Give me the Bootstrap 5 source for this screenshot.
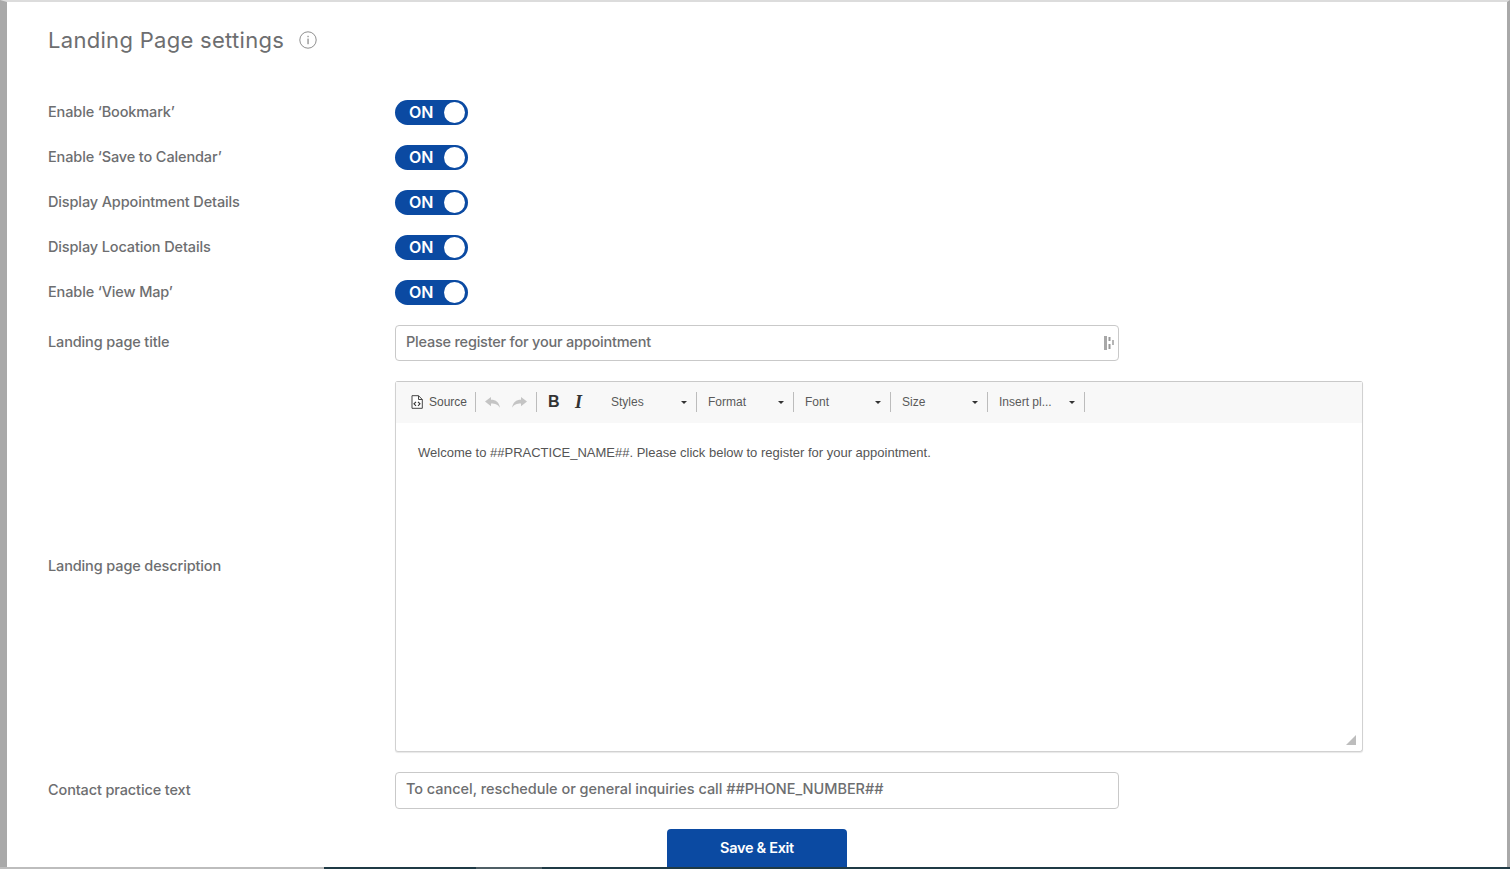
<!DOCTYPE html>
<html lang="en">
<head>
<meta charset="utf-8">
<title>Landing Page settings</title>
<link rel="stylesheet" href="https://cdn.jsdelivr.net/npm/bootstrap@5.3.0/dist/css/bootstrap.min.css">
<style>
html,body{height:100%;margin:0;overflow:hidden}
body{font-family:Inter,"Liberation Sans",sans-serif;color:#6d6e70;background:#fff}
.shell{height:869px;display:flex;flex-direction:column}
.pane{flex:1 1 auto;min-height:0;overflow:hidden;border-top:2px solid #dcdcdc;border-left:7px solid #a9a9a9;border-right:3px solid #a9a9a9;padding:0 0 0 41px}
.page-ttl{font-size:22px;font-weight:400;line-height:30px;letter-spacing:.3px;color:#6d6e70;margin:0;padding-top:23px;height:88px;gap:15px}
.ttl-info{margin-top:6px}
.set-row{height:45px}
.set-label{width:347px;flex:none;font-size:14.5px;font-weight:500;line-height:20px;color:#6d6e70;letter-spacing:-.13px;margin:0;padding-bottom:2px}
.tog{width:73px;height:25px;border-radius:13px;background:#0b4aa2;color:#fff;font-size:16px;font-weight:600;line-height:25px;padding-left:14px;position:relative}
.tog::after{content:"";position:absolute;right:3px;top:2px;width:21px;height:21px;border-radius:50%;background:#fff}
.field-wrap{width:724px;position:relative}
.form-control.fld{height:36px;border:1px solid #c9c9c9;border-radius:4px;font-size:14.5px;font-weight:500;color:#6d6e70;padding:0 10px 4px;box-shadow:none;letter-spacing:-.22px}
.form-control.fld-tall{height:37px;letter-spacing:-.03px}
.row-gap-a{margin-top:10px}
.row-gap-b{margin-top:20px}
.grab{position:absolute;right:4px;top:10px}
.ed{width:968px;height:371px;border:1px solid #d1d1d1;border-top-color:#c9c9c9;border-radius:3px;display:flex;flex-direction:column;position:relative;font-family:"Liberation Sans",Arial,sans-serif;box-shadow:0 1px 1px #e8e8e8}
.ed-bar{height:41px;background:#f8f8f8;display:flex;align-items:center;font-size:12px;color:#555;flex:none;padding-bottom:1px}
.sep{width:1px;height:20px;background:#bcbcbc;flex:none}
.tb{display:flex;align-items:center;flex:none}
.tb-src{margin-left:15px;width:64px;gap:6px}
.tb-undo{width:27px}
.tb-redo{width:24px}
.tb-b{width:27px}
.tb-i{width:24px}
.sep-a{margin-right:9px}
.sep-b{margin-right:11px}
.combo{width:96px;padding-left:11px;display:flex;align-items:center;justify-content:space-between;padding-right:9px;flex:none;color:#5a5a5a}
.combo-first{width:97px;padding-left:12px}
.caret-s{width:0;height:0;border-left:3.5px solid transparent;border-right:3.5px solid transparent;border-top:3.5px solid #333;margin-top:1px}
.bold-g{font-family:"Liberation Sans",Arial,sans-serif;font-weight:700;font-size:16px;color:#333;line-height:1}
.ital-g{font-family:"Liberation Serif",serif;font-style:italic;font-weight:700;font-size:18px;color:#333;line-height:1}
.ed-body{flex:1;padding:21px 22px;font-size:13px;line-height:18px;color:#555}
.ed-grip{position:absolute;right:6px;bottom:6px}
.btn.btn-save{width:180px;height:44px;margin-left:619px;margin-top:20px;background:#0b4aa2;border:0;border-radius:4px 4px 0 0;color:#fff;font-weight:600;font-size:14.5px;letter-spacing:-.3px;padding:0 0 6px;display:block}
.strip{height:2px;display:flex;flex:none}
.strip-a{width:324px;background:#bdbdbd}
.strip-b{width:152px;background:#1f3a45}
.strip-c{width:66px;background:#4f5f66}
.strip-d{flex:1;background:#1f3a45}
</style>
</head>
<body>
<div class="shell">
<main class="pane">
  <h1 class="page-ttl d-flex align-items-start">
    <span>Landing Page settings</span>
    <svg class="ttl-info" width="18" height="18" viewBox="0 0 18 18" fill="none" aria-hidden="true"><circle cx="9" cy="9" r="8.2" stroke="#8f8f8f" stroke-width="1"/><rect x="8.4" y="7.6" width="1.3" height="5.6" fill="#8f8f8f"/><rect x="8.4" y="4.8" width="1.3" height="1.4" fill="#8f8f8f"/></svg>
  </h1>
  <div class="set-row d-flex align-items-center"><label class="set-label">Enable ‘Bookmark’</label><div class="tog">ON</div></div>
  <div class="set-row d-flex align-items-center"><label class="set-label">Enable ‘Save to Calendar’</label><div class="tog">ON</div></div>
  <div class="set-row d-flex align-items-center"><label class="set-label">Display Appointment Details</label><div class="tog">ON</div></div>
  <div class="set-row d-flex align-items-center"><label class="set-label">Display Location Details</label><div class="tog">ON</div></div>
  <div class="set-row d-flex align-items-center"><label class="set-label">Enable ‘View Map’</label><div class="tog">ON</div></div>
  <div class="d-flex align-items-center row-gap-a">
    <label class="set-label">Landing page title</label>
    <div class="field-wrap">
      <input class="form-control fld" type="text" value="Please register for your appointment">
      <svg class="grab" width="12" height="16" viewBox="0 0 12 16" aria-hidden="true"><rect x="1" y="1" width="3" height="14" fill="#a8a8a8"/><rect x="5.5" y="2" width="2" height="4" fill="#9a9a9a"/><rect x="5.5" y="9" width="2" height="5" fill="#9a9a9a"/><rect x="9" y="5" width="2" height="5" fill="#b5b5b5"/></svg>
    </div>
  </div>
  <div class="d-flex align-items-center row-gap-b">
    <label class="set-label">Landing page description</label>
    <div class="ed">
      <div class="ed-bar">
        <span class="tb tb-src">
          <svg width="12" height="14" viewBox="0 0 12 14" fill="none" aria-hidden="true"><path d="M1 .7h6.500L11.300 4.500v8.800H1z" fill="#fff" stroke="#444"/><path d="M7.500 .7v3.800h3.800" stroke="#444"/><path d="M5 6.800 3 8.800l2 2M7 6.800l2 2-2 2" stroke="#333" stroke-width="1.1"/></svg>
          <span>Source</span>
        </span>
        <span class="sep sep-a"></span>
        <span class="tb tb-undo"><svg width="15" height="11" viewBox="0 0 15 11" aria-hidden="true"><path d="M0 4.500 6 0v2.800c5 0 8 2.600 9 8-2-3.200-4.600-4.300-9-4.300v2.800z" fill="#c4c4c4"/></svg></span>
        <span class="tb tb-redo"><svg width="15" height="11" viewBox="0 0 15 11" aria-hidden="true"><path d="M15 4.500 9 0v2.800c-5 0-8 2.600-9 8 2-3.200 4.600-4.300 9-4.300v2.800z" fill="#c4c4c4"/></svg></span>
        <span class="sep sep-b"></span>
        <span class="tb bold-g tb-b">B</span>
        <span class="tb ital-g tb-i">I</span>
        <span class="combo combo-first"><span>Styles</span><span class="caret-s"></span></span>
        <span class="sep"></span>
        <span class="combo"><span>Format</span><span class="caret-s"></span></span>
        <span class="sep"></span>
        <span class="combo"><span>Font</span><span class="caret-s"></span></span>
        <span class="sep"></span>
        <span class="combo"><span>Size</span><span class="caret-s"></span></span>
        <span class="sep"></span>
        <span class="combo"><span>Insert pl...</span><span class="caret-s"></span></span>
        <span class="sep"></span>
      </div>
      <div class="ed-body">Welcome to ##PRACTICE_NAME##. Please click below to register for your appointment.</div>
      <svg class="ed-grip" width="10" height="10" viewBox="0 0 10 10" aria-hidden="true"><path d="M10 0v10H0z" fill="#bdbdbd"/></svg>
    </div>
  </div>
  <div class="d-flex align-items-center row-gap-b">
    <label class="set-label">Contact practice text</label>
    <div class="field-wrap"><input class="form-control fld fld-tall" type="text" value="To cancel, reschedule or general inquiries call ##PHONE_NUMBER##"></div>
  </div>
  <button class="btn btn-primary btn-save" type="button">Save &amp; Exit</button>
</main>
<div class="strip"><span class="strip-a"></span><span class="strip-b"></span><span class="strip-c"></span><span class="strip-d"></span></div>
</div>
</body>
</html>
